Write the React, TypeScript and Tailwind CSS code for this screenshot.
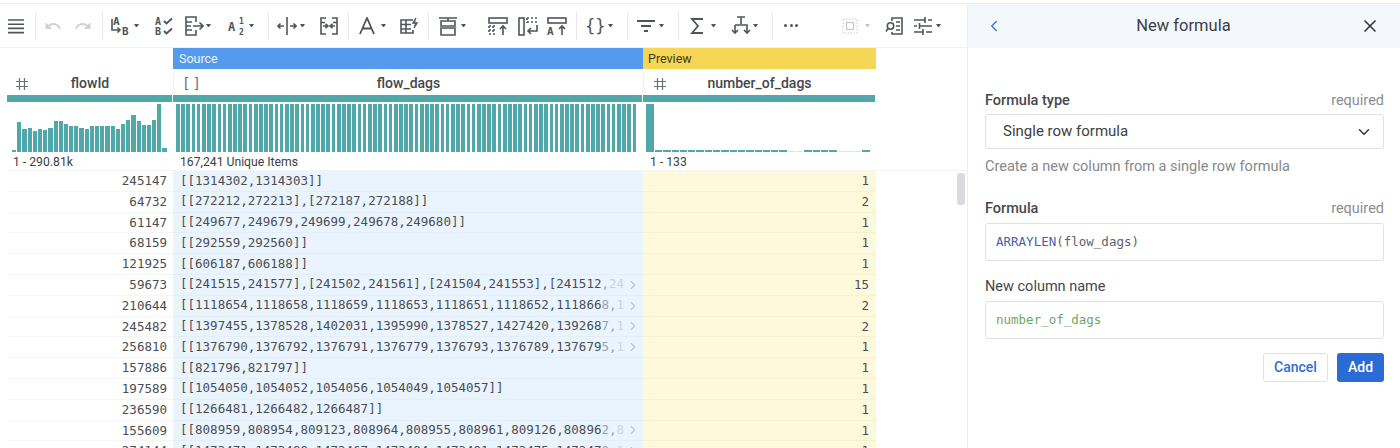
import React from "react";
import { MdUndo, MdRedo } from "react-icons/md";
import { ChevronLeft, ChevronDown, ChevronRight, X } from "lucide-react";

const S = "#50555b";
const MONO = { fontFamily: "'DejaVu Sans Mono', monospace", fontWeight: 700 } as const;

function Ic({ className, children, w = 20 }: { className?: string; children: React.ReactNode; w?: number }) {
  return (
    <svg width={w} height={22} viewBox={`0 0 ${w} 22`} fill="none" stroke={S} strokeWidth={1.6} className={`shrink-0 ${className ?? ""}`}>
      {children}
    </svg>
  );
}
function Caret({ className, light }: { className?: string; light?: boolean }) {
  return <span className={`shrink-0 w-[5px] h-0 border-x-[2.5px] border-x-transparent border-t-[3px] ${light ? "border-t-[#c9c9c9]" : "border-t-[#50555b]"} ${className ?? ""}`} />;
}
function Sep({ className }: { className?: string }) {
  return <span className={`shrink-0 w-px h-[28px] bg-[#e4e6e8] ${className ?? ""}`} />;
}
function T({ x, y, s = 8, children }: { x: number; y: number; s?: number; children: React.ReactNode }) {
  return (
    <text x={x} y={y} fontSize={s} fill={S} stroke="none" style={MONO}>
      {children}
    </text>
  );
}

function Toolbar() {
  return (
    <div className="h-[44px] flex items-center border-b border-[#eef0f2]">
      <svg width={18} height={16} viewBox="0 0 18 16" stroke={S} strokeWidth={1.6} className="shrink-0 ml-[7px]">
        <path d="M1 2h16M1 6.200h16M1 10.400h16M1 14.600h16" />
      </svg>
      <Sep className="ml-[10px]" />
      <MdUndo className="shrink-0 ml-[8px] w-[18px] h-[18px] text-[#cfd1d3]" />
      <MdRedo className="shrink-0 ml-[12px] w-[18px] h-[18px] text-[#cfd1d3]" />
      <Sep className="ml-[10px]" />
      <Ic className="ml-[7px]">
        <T x={3} y={10} s={11}>A</T>
        <T x={12} y={20} s={11}>B</T>
        <path d="M2 4v11h8M7.500 12.500L10 15l-2.500 2.500" />
      </Ic>
      <Caret className="ml-[4px]" />
      <Ic className="ml-[16px]" w={18}>
        <T x={0} y={10} s={10}>A</T>
        <T x={0} y={20} s={10}>B</T>
        <path d="M9 6l2.500 2.500L17 3.500M9 16l2.500 2.500L17 13.500" strokeWidth={1.9} />
      </Ic>
      <Ic className="ml-[11px]">
        <path d="M12 7V2H2v18h10v-5M2 7h6M2 11h5M2 15h6M9 11h10M15.500 7.500L19 11l-3.500 3.500" />
      </Ic>
      <Caret className="ml-[2px]" />
      <Ic className="ml-[17px]" w={18}>
        <T x={0} y={16} s={12}>A</T>
        <T x={11} y={9} s={8}>1</T>
        <T x={11} y={20} s={8}>2</T>
      </Ic>
      <Caret className="ml-[3px]" />
      <Sep className="ml-[14px]" />
      <Ic className="ml-[8px]">
        <path d="M10 2v18" />
        <path d="M1 11h6M3.500 8.500L1 11l2.500 2.500M13 11h6M16.500 8.500L19 11l-2.500 2.500" />
      </Ic>
      <Caret className="ml-[3px]" />
      <Ic className="ml-[14px]">
        <path d="M7 3H2v16h5M13 3h5v16h-5M2 7.500h4M14 7.500h4M4 11h5M6.500 8.800L9 11l-2.500 2.200M16 11h-5M13.500 8.800L11 11l2.500 2.200" />
      </Ic>
      <Sep className="ml-[9px]" />
      <svg width={16} height={18} viewBox="0 0 16 18" fill="none" stroke={S} strokeWidth={1.8} className="shrink-0 ml-[10px]">
        <path d="M1 17L8 1l7 16M3.500 11.500h9" />
      </svg>
      <Caret className="ml-[6px]" />
      <Ic className="ml-[13px]">
        <path d="M14 5H2v13h12v-3M2 9.500h10M2 14h10M7 5v13" />
        <path d="M17 3l-3 5h4l-3 5" strokeWidth={1.4} fill={S} />
      </Ic>
      <Sep className="ml-[9px]" />
      <Ic className="ml-[9px]">
        <path d="M1 3h18M10 3v3M3 6h14v5H3zM3 13h14v7H3z" />
      </Ic>
      <Caret className="ml-[3px]" />
      <Ic className="ml-[22px]">
        <rect x="1" y="3" width="18" height="5" />
        <path d="M1 11h8M1 15h8M1 19h8M1 11v8M5 11v8" strokeDasharray="2 2" />
        <path d="M15 20v-9M12 14l3-3 3 3" />
      </Ic>
      <Ic className="ml-[10px]">
        <rect x="1" y="3" width="5" height="17" />
        <path d="M9 3h10M9 7h10M9 3v5" strokeDasharray="2 2" />
        <path d="M19 10v6H10M13 13l-3 3 3 3" />
      </Ic>
      <Ic className="ml-[9px]">
        <rect x="1" y="3" width="18" height="5" />
        <T x={0} y={20} s={11}>A</T>
        <path d="M15 20v-9M12 14l3-3 3 3" />
      </Ic>
      <Sep className="ml-[9px]" />
      <span className="shrink-0 ml-[8px] w-[20px] text-center text-[17px] leading-[20px] text-[#50555b]" style={{ fontFamily: "'DejaVu Sans Mono', monospace" }}>{"{}"}</span>
      <Caret className="ml-[3px]" />
      <Sep className="ml-[14px]" />
      <Ic className="ml-[8px]">
        <path d="M1 6h18M5 11h10M8 16h4" strokeWidth={1.8} />
      </Ic>
      <Caret className="ml-[3px]" />
      <Sep className="ml-[14px]" />
      <svg width={14} height={18} viewBox="0 0 14 18" fill="none" stroke={S} strokeWidth={1.8} className="shrink-0 ml-[11px]">
        <path d="M13 2H2l6 7-6 7h11" />
      </svg>
      <Caret className="ml-[7px]" />
      <Ic className="ml-[15px]">
        <path d="M6 2h8M10 2v7M4 10h12v8M4 10v8M1 15l3 3 3-3M13 15l3 3 3-3" />
      </Ic>
      <Caret className="ml-[2px]" />
      <Sep className="ml-[14px]" />
      <span className="shrink-0 ml-[11px] w-[14px] flex justify-between">
        <span className="w-[3px] h-[3px] rounded-full bg-[#50555b]" />
        <span className="w-[3px] h-[3px] rounded-full bg-[#50555b]" />
        <span className="w-[3px] h-[3px] rounded-full bg-[#50555b]" />
      </span>
      <svg width={16} height={16} viewBox="0 0 16 16" fill="none" stroke="#c9cbce" className="shrink-0 ml-[44px]">
        <rect x="1" y="1" width="14" height="14" strokeDasharray="1.500 1.500" />
        <rect x="4.500" y="4.500" width="7" height="7" strokeWidth={1.4} />
      </svg>
      <Caret light className="ml-[7px]" />
      <Ic className="ml-[15px]" w={18}>
        <path d="M7 6V3h10v16H7v-2" />
        <circle cx="5.500" cy="11" r="3.200" />
        <path d="M3 13.500L1 16.500M11 7h4M11 11h4M11 15h4" />
      </Ic>
      <Ic className="ml-[10px]">
        <path d="M1 5h11M15 5h4M12 2v6M1 11h3M7 11h12M6.500 8v6M1 17h9M13 17h6M10 14v6" />
      </Ic>
      <Caret className="ml-[3px]" />
    </div>
  );
}

const flowHeights = [2, 30, 23, 24, 21, 23, 22, 24, 31, 31, 28, 26, 26, 24, 23, 26, 26, 26, 26, 26, 23, 28, 32, 37, 31, 27, 27, 32, 48, 4];
const previewDashes = [1, 1, 1, 1, 1, 1, 1, 1, 1, 1, 1, 1, 1, 1, 1, 1, 0, 0, 1, 1, 1, 1, 0, 0, 0, 1];

const rows: [string, string, string, string, string][] = [
  ["245147", "[[1314302,1314303]]", "", "", "1"],
  ["64732", "[[272212,272213],[272187,272188]]", "", "", "2"],
  ["61147", "[[249677,249679,249699,249678,249680]]", "", "", "1"],
  ["68159", "[[292559,292560]]", "", "", "1"],
  ["121925", "[[606187,606188]]", "", "", "1"],
  ["59673", "[[241515,241577],[241502,241561],[241504,241553],[241512", ",", "24", "15"],
  ["210644", "[[1118654,1118658,1118659,1118653,1118651,1118652,111866", "8,", "1", "2"],
  ["245482", "[[1397455,1378528,1402031,1395990,1378527,1427420,139268", "7,", "1", "2"],
  ["256810", "[[1376790,1376792,1376791,1376779,1376793,1376789,137679", "5,", "1", "1"],
  ["157886", "[[821796,821797]]", "", "", "1"],
  ["197589", "[[1054050,1054052,1054056,1054049,1054057]]", "", "", "1"],
  ["236590", "[[1266481,1266482,1266487]]", "", "", "1"],
  ["155609", "[[808959,808954,809123,808964,808955,808961,809126,80896", "2,", "8", "1"],
  ["274144", "[[1473471,1473488,1473467,1473484,1473481,1473475,147347", "0,", "1", "1"],
];

const mono = { fontFamily: "'DejaVu Sans Mono', monospace" };

function Hash() {
  return (
    <svg width={14} height={14} viewBox="0 0 14 14" stroke="#6b7075" strokeWidth={1.2} className="shrink-0">
      <path d="M1 4.500h12M1 9.500h12M4.500 1v12M9.500 1v12" />
    </svg>
  );
}

function Table() {
  return (
    <div className="relative flex-1 overflow-hidden pl-[7px] font-['Roboto',sans-serif] text-[#44484c]">
      <div className="flex h-[21px] text-[12.500px] leading-[22px]">
        <div className="w-[166px]" />
        <div className="w-[470px] bg-[#559bed] text-[#e8f2fd] pl-[6px]">Source</div>
        <div className="w-[233px] bg-[#f6d655] text-[#3d3a20] pl-[5px]">Preview</div>
      </div>
      <div className="flex h-[26px] pt-[3px] items-center text-[14px] font-medium">
        <div className="w-[166px] flex items-center pl-[8px]">
          <Hash />
          <span className="flex-1 text-center pr-[22px]">flowId</span>
        </div>
        <div className="w-[470px] flex items-center pl-[8px] border-l border-[#f0f1f2]">
          <span className="text-[14px] text-[#6b7075] w-[14px] tracking-[2px]" style={mono}>[]</span>
          <span className="flex-1 text-center pr-[22px]">flow_dags</span>
        </div>
        <div className="w-[233px] flex items-center pl-[9px] border-l border-[#f0f1f2]">
          <Hash />
          <span className="flex-1 text-center pr-[24px]">number_of_dags</span>
        </div>
      </div>
      <div className="flex h-[7px] gap-px">
        <div className="w-[165px] bg-[#51a8ab]" />
        <div className="w-[469px] bg-[#51a8ab]" />
        <div className="w-[232px] bg-[#51a8ab]" />
      </div>
      <div className="flex h-[50px] items-end">
        <div className="w-[166px] h-[48px] flex items-end pl-[5px] gap-[1px]">
          {flowHeights.map((h, i) => (
            <span key={i} className="w-[4.200px] bg-[#51a8ab] shrink-0" style={{ height: h }} />
          ))}
        </div>
        <div className="w-[470px] h-[48px] flex items-end pl-[3px] gap-[1.500px]">
          {Array.from({ length: 89 }).map((_, i) => (
            <span key={i} className="w-[3.700px] h-[48px] bg-[#51a8ab] shrink-0" />
          ))}
        </div>
        <div className="w-[233px] h-[48px] flex items-end pl-[3px]">
          <span className="w-[8px] h-[48px] bg-[#51a8ab] shrink-0 mr-[1px]" />
          {previewDashes.map((d, i) => (
            <span key={i} className={`w-[7.300px] mr-[1px] shrink-0 ${d ? "h-[2px] bg-[#51a8ab]" : "h-px bg-[#dfe3e4]"}`} />
          ))}
        </div>
      </div>
      <div className="flex h-[19px] pt-[3px] items-center text-[12.200px] text-[#3c4043] border-b border-[#f3f4f5]">
        <div className="w-[166px] pl-[6px]">1 - 290.81k</div>
        <div className="w-[470px] pl-[7px]">167,241 Unique Items</div>
        <div className="w-[233px] pl-[7px]">1 - 133</div>
      </div>
      <div className="text-[12.500px] leading-[20.800px] text-[#4a4e52]" style={mono}>
        {rows.map(([id, text, mid, fade, n]) => (
          <div key={id} className="flex h-[20.800px]">
            <div className="w-[166px] text-right pr-[6px] border-b border-[#f4f5f6]">{id}</div>
            <div className="w-[470px] bg-[#eaf4fe] border-b border-[#e3eef9] pl-[7px] flex items-center whitespace-nowrap overflow-hidden">
              <span>{text}</span>
              {mid && <span className="text-[#9aa3ab]">{mid}</span>}
              {fade && <span className="text-[#cdd5dc]">{fade}</span>}
              {fade && <ChevronRight className="absolute left-[626px] w-[14px] h-[14px] text-[#bcc4cc]" />}
            </div>
            <div className="w-[233px] bg-[#fff9dc] border-b border-[#f8f1d0] text-right pr-[7px]">{n}</div>
          </div>
        ))}
      </div>
      <div className="absolute left-[957px] top-[125px] w-[8px] h-[32px] rounded-[3px] bg-[#d9dbde]" />
    </div>
  );
}

function FieldLabel({ children, required }: { children: React.ReactNode; required?: boolean }) {
  return (
    <div className="flex justify-between items-center h-[18px]">
      <span className="text-[14.500px] font-medium text-[#44484c]">{children}</span>
      {required && <span className="text-[14.500px] text-[#8a8e92]">required</span>}
    </div>
  );
}

function Panel() {
  return (
    <div className="w-[433px] shrink-0 border-l border-[#eceef0] font-['Roboto',sans-serif]">
      <div className="h-[44px] bg-[#f4f7fb] flex items-center pl-[17px] pr-[20px]">
        <ChevronLeft className="w-[18px] h-[18px] text-[#3b78d8]" strokeWidth={2} />
        <span className="flex-1 text-center text-[16.500px] text-[#3c4043] pl-[4px]">New formula</span>
        <X className="w-[20px] h-[20px] text-[#33373b]" strokeWidth={2} />
      </div>
      <div className="pl-[17px] pr-[16px] pt-[44px]">
        <FieldLabel required>Formula type</FieldLabel>
        <div className="mt-[4px] h-[35px] border border-[#dfe2e5] rounded-[3px] flex items-center pl-[17px] pr-[10px] text-[15px] text-[#3c4043]">
          <span className="flex-1">Single row formula</span>
          <ChevronDown className="w-[18px] h-[18px] text-[#33373b]" strokeWidth={2} />
        </div>
        <div className="mt-[9px] h-[18px] leading-[18px] text-[14.500px] text-[#85898d]">Create a new column from a single row formula</div>
        <div className="mt-[24px]">
          <FieldLabel required>Formula</FieldLabel>
        </div>
        <div className="mt-[5px] h-[38px] border border-[#dfe2e5] rounded-[3px] flex items-center pl-[10px] text-[12.500px]" style={mono}>
          <span className="text-[#3f62b0]">ARRAYLEN</span>
          <span className="text-[#5f6368]">(flow_dags)</span>
        </div>
        <div className="mt-[17px]">
          <FieldLabel><span className="font-normal">New column name</span></FieldLabel>
        </div>
        <div className="mt-[5px] h-[38px] border border-[#dfe2e5] rounded-[3px] flex items-center pl-[10px] text-[12.500px] text-[#6fa866]" style={mono}>
          number_of_dags
        </div>
        <div className="mt-[14px] flex justify-end gap-[9px]">
          <button className="w-[65px] h-[29px] border border-[#dfe2e5] rounded-[3px] text-[14px] font-medium text-[#2f6fd0] bg-white">Cancel</button>
          <button className="w-[47px] h-[29px] rounded-[3px] text-[14px] font-medium text-white bg-[#2a6bd6]">Add</button>
        </div>
      </div>
    </div>
  );
}

export default function App() {
  return (
    <div className="w-[1400px] h-[448px] overflow-hidden bg-white flex flex-col">
      <div className="h-[4px] shrink-0 border-b border-[#eceef0]" />
      <div className="flex flex-1 min-h-0">
        <div className="w-[967px] shrink-0 flex flex-col">
          <Toolbar />
          <Table />
        </div>
        <Panel />
      </div>
    </div>
  );
}
